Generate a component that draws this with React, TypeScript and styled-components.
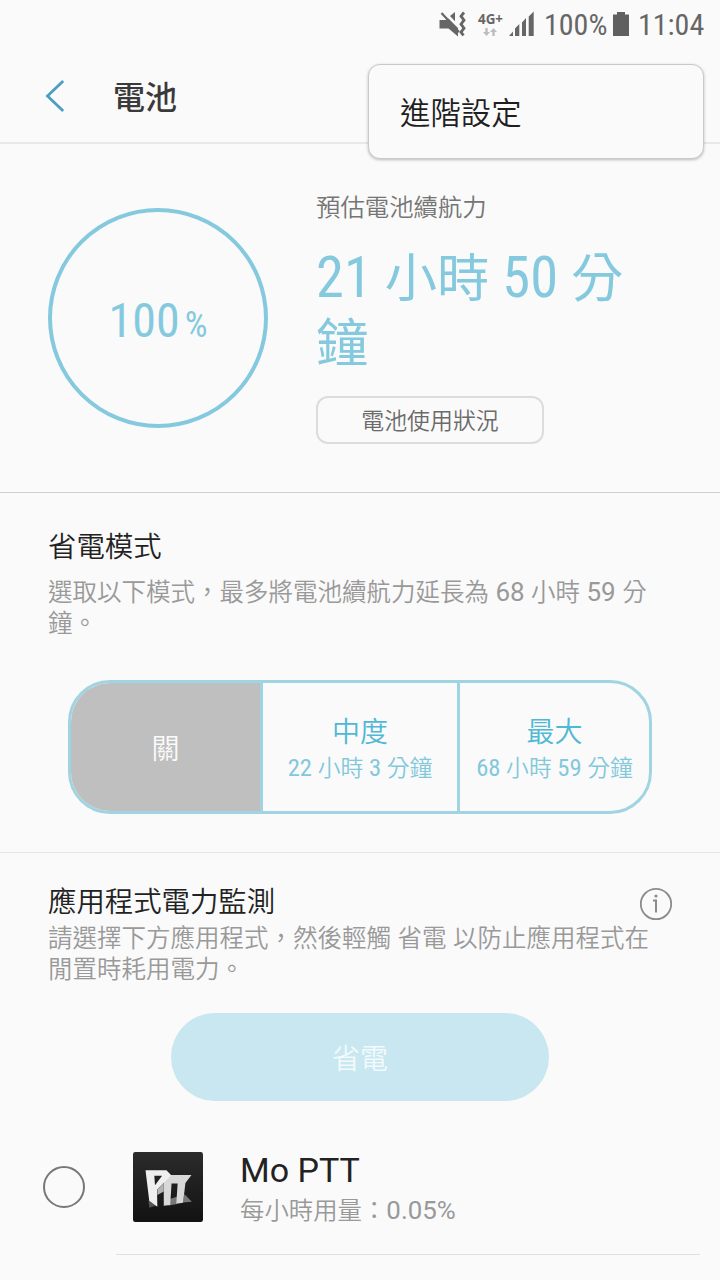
import React from 'react';
import styled, { createGlobalStyle } from 'styled-components';

const Global = createGlobalStyle`
  * { box-sizing: border-box; }
  body {
    margin: 0;
    background: #fafafa;
    color: #252525;
    font-family: Roboto, "Noto Sans CJK TC", sans-serif;
    font-weight: 350;
  }
  h1, h2, p { margin: 0; font-weight: inherit; }
  button { margin: 0; padding: 0; border: 0; background: none; color: inherit; font: inherit; }
`;

const Screen = styled.div`
  position: relative;
  width: 720px;
  height: 1280px;
  overflow: hidden;
  background: #fafafa;
`;

/* Latin runs are set slightly larger than the Chinese text around them. */
const Latin = styled.span<{ $condensed?: boolean }>`
  font-family: ${p => (p.$condensed ? '"Roboto Condensed", ' : '')}Roboto, sans-serif;
  font-size: ${p => (p.$condensed ? 1.08 : 1.06)}em;
  font-weight: 400;
  line-height: 0;
`;

const StatusBar = styled.div`
  display: flex;
  justify-content: flex-end;
  height: 48px;
  padding: 0 16px 0 0;
  color: #666;
`;

const StatusText = styled.span<{ $width: number }>`
  width: ${p => p.$width}px;
  font: 400 30px/50px "Roboto Condensed", Roboto, sans-serif;
  white-space: nowrap;
`;

const StatusIcons = styled.svg`
  display: block;
  width: 104px;
  height: 48px;
  margin-right: 4px;
`;

const BatteryIcon = styled.svg`
  display: block;
  width: 16px;
  height: 25px;
  margin: 12px 9px 0 6px;
`;

const NetworkLabel = styled.text`
  font: 700 13.5px "Open Sans", "Noto Sans", sans-serif;
`;

const Header = styled.header`
  display: flex;
  align-items: center;
  height: 96px;
  padding: 4px 0 0 44px;
  border-bottom: 2px solid #e8e8e8;
`;

const BackIcon = styled.svg`
  display: block;
  width: 22px;
  height: 34px;
  margin: -2px 47px 0 0;
`;

const Title = styled.h1`
  font-size: 32px;
  line-height: 42px;
  font-weight: 500;
  color: #3a3a3a;
  padding-top: 2px;
`;

const Menu = styled.div`
  position: absolute;
  top: 64px;
  left: 368px;
  width: 336px;
  height: 95px;
  padding: 0 31px;
  border: 1px solid #c9c9c9;
  border-radius: 12px;
  background: #fafafa;
  box-shadow: 0 1px 3px rgba(0, 0, 0, 0.25);
  font-size: 30.4px;
  line-height: 98px;
  color: #1f1f1f;
`;

const Overview = styled.section`
  display: flex;
  height: 349px;
  padding: 48px 40px 0 48px;
  border-bottom: 1px solid #cfcfcf;
`;

const Gauge = styled.div`
  display: flex;
  align-items: baseline;
  justify-content: center;
  width: 220px;
  height: 220px;
  margin: 16px 49px 0 0;
  border: 4px solid #84c9de;
  border-radius: 50%;
  color: #84c9de;
  font-family: "Roboto Condensed", Roboto, sans-serif;
  font-weight: 400;
`;

const GaugeValue = styled.span`
  font-size: 48px;
  line-height: 218px;
`;

const GaugeUnit = styled.span`
  margin-left: 5px;
  font-size: 36px;
  line-height: 60px;
`;

const Estimate = styled.div`
  width: 330px;
  margin-left: -1px;
`;

const EstimateLabel = styled.p`
  font-size: 24.4px;
  line-height: 32px;
  color: #757575;
`;

const EstimateValue = styled.p`
  margin: 23px 0 19px;
  font-size: 52.3px;
  font-weight: 400;
  line-height: 65px;
  color: #84c9de;
`;

const UsageButton = styled.button`
  display: block;
  width: 228px;
  height: 48px;
  border: 2px solid #dcdcdc;
  border-radius: 12px;
  font-size: 22.9px;
  line-height: 44px;
  padding-top: 2px;
  color: #6b6b6b;
`;

const Section = styled.section<{ $height: number; $top: number; $line?: boolean }>`
  height: ${p => p.$height}px;
  padding: ${p => p.$top}px 48px 0;
  border-bottom: ${p => (p.$line ? '1px solid #e6e6e6' : '0')};
`;

const SectionHead = styled.div`
  display: flex;
  justify-content: space-between;
  height: 36px;
`;

const Heading = styled.h2`
  font-size: 28.4px;
  line-height: 36px;
  color: #222;
`;

const Description = styled.p<{ $top?: number }>`
  margin-top: ${p => p.$top ?? 0}px;
  font-size: 24.5px;
  line-height: 30.5px;
  color: #999;
  white-space: nowrap;
`;

const InfoIcon = styled.svg`
  display: block;
  width: 34px;
  height: 34px;
  margin: 2px -1px 0 0;
`;

const Modes = styled.div`
  display: flex;
  height: 134px;
  margin: 41px 20px 0;
  border: 3px solid #a0d4e3;
  border-radius: 42px;
  overflow: hidden;
`;

const Mode = styled.button<{ $width: number; $active?: boolean }>`
  display: flex;
  flex-direction: column;
  align-items: center;
  justify-content: center;
  width: ${p => p.$width}px;
  padding-top: 6px;
  background: ${p => (p.$active ? '#bfbfbf' : 'transparent')};
  color: ${p => (p.$active ? '#fafafa' : '#4fb8d4')};
  & + & { border-left: 3px solid #a0d4e3; }
`;

const ModeName = styled.span`
  font-size: 28px;
  line-height: 38px;
`;

const ModeTime = styled.span`
  font-size: 22.8px;
  line-height: 34px;
  color: #82c8dc;
  white-space: nowrap;
`;

const SaveButton = styled.button`
  display: block;
  width: 378px;
  height: 88px;
  margin: 28px auto 0;
  border-radius: 44px;
  background: #c9e7f0;
  font-size: 28px;
  line-height: 86px;
  padding-top: 4px;
  color: #f1fafc;
`;

const AppRow = styled.div`
  display: flex;
  height: 103px;
  margin-top: 51px;
`;

const Radio = styled.span`
  width: 42px;
  height: 42px;
  margin: 14px 48px 0 -5px;
  border: 2px solid #777;
  border-radius: 50%;
`;

const AppIcon = styled.svg`
  display: block;
  width: 70px;
  height: 70px;
  margin: 0 37px 0 0;
`;

const AppText = styled.div`
  width: 400px;
`;

const AppName = styled.p`
  font-size: 34px;
  font-weight: 400;
  line-height: 37px;
  color: #222;
`;

const AppUsage = styled.p`
  margin-top: 5px;
  font-size: 24.4px;
  line-height: 34px;
  color: #999;
`;

const RowLine = styled.div`
  height: 1px;
  margin: -1px -28px 0 68px;
  background: #e0e0e0;
`;

export default function App() {
  return (
    <Screen>
      <Global />
      <StatusBar>
        <StatusIcons viewBox="436 0 104 48" fill="#666">
          <path d="M439.500 20h7l2-1.500 9.500 9.500V36.500l-9.500-8h-9z" />
          <path d="M450 16l5-4v9.200z" />
          <path d="M441.500 13l17.500 19" stroke="#666" strokeWidth="2.200" />
          <path d="M464 12.500l-3 3.700 3 4-3 4 3 4-3 4 2.500 3.300" fill="none" stroke="#666" strokeWidth="2.800" />
          <NetworkLabel x="478" y="23.500" textLength="25" lengthAdjust="spacingAndGlyphs">4G+</NetworkLabel>
          <path d="M485.300 28h2.400v4h2.300l-3.500 4-3.500-4h2.300zM492.300 36h2.400v-4h2.300l-3.500-4-3.500 4h2.300z" fill="#bdbdbd" />
          <path d="M509 36l4-4.500V36zM515 36v-7.500l4.300-4.500V36zM522 36V22.500l4-4.500v18zM528.700 36V16.500l5-5V36z" />
        </StatusIcons>
        <StatusText $width={63}>100%</StatusText>
        <BatteryIcon viewBox="0 0 16 25">
          <path d="M0 2.500h4V0h8v2.500h4V24H0z" fill="#606060" />
        </BatteryIcon>
        <StatusText $width={66}>11:04</StatusText>
      </StatusBar>

      <Header>
        <BackIcon viewBox="0 0 22 34">
          <path d="M19.200 2L3.500 17l15.700 15" fill="none" stroke="#4d9fbe" strokeWidth="2.800" />
        </BackIcon>
        <Title>電池</Title>
      </Header>
      <Menu>進階設定</Menu>

      <Overview>
        <Gauge>
          <GaugeValue>100</GaugeValue>
          <GaugeUnit>%</GaugeUnit>
        </Gauge>
        <Estimate>
          <EstimateLabel>預估電池續航力</EstimateLabel>
          <EstimateValue>
            <Latin $condensed>21 </Latin>小時<Latin $condensed> 50 </Latin>分<br />鐘
          </EstimateValue>
          <UsageButton>電池使用狀況</UsageButton>
        </Estimate>
      </Overview>

      <Section $height={360} $top={37} $line>
        <Heading>省電模式</Heading>
        <Description $top={12}>
          選取以下模式，最多將電池續航力延長為<Latin> 68 </Latin>小時<Latin> 59 </Latin>分<br />鐘。
        </Description>
        <Modes>
          <Mode $width={189} $active><ModeName>關</ModeName></Mode>
          <Mode $width={197}>
            <ModeName>中度</ModeName>
            <ModeTime><Latin $condensed>22 </Latin>小時<Latin $condensed> 3 </Latin>分鐘</ModeTime>
          </Mode>
          <Mode $width={192}>
            <ModeName>最大</ModeName>
            <ModeTime><Latin $condensed>68 </Latin>小時<Latin $condensed> 59 </Latin>分鐘</ModeTime>
          </Mode>
        </Modes>
      </Section>

      <Section $height={427} $top={32}>
        <SectionHead>
          <Heading>應用程式電力監測</Heading>
          <InfoIcon viewBox="0 0 34 34">
            <circle cx="17" cy="17" r="15.200" fill="none" stroke="#8c8c8c" strokeWidth="1.800" />
            <path d="M14 13.500h3v12" fill="none" stroke="#8c8c8c" strokeWidth="2" />
            <circle cx="17" cy="9" r="1.600" fill="#8c8c8c" />
          </InfoIcon>
        </SectionHead>
        <Description $top={3}>
          請選擇下方應用程式，然後輕觸<Latin> </Latin>省電<Latin> </Latin>以防止應用程式在<br />閒置時耗用電力。
        </Description>
        <SaveButton>省電</SaveButton>
        <AppRow>
          <Radio />
          <AppIcon viewBox="18 18 207 207">
            <defs>
              <linearGradient id="tile" x1="0" y1="0" x2="0" y2="1">
                <stop offset="0" stopColor="#2b2b2b" />
                <stop offset="1" stopColor="#121212" />
              </linearGradient>
            </defs>
            <rect x="18" y="18" width="207" height="207" rx="7" fill="url(#tile)" />
            <path d="M64 160l22 16-20 7z" fill="#555" />
            <path d="M124 158l24-8v22l-24 4z" fill="#777" />
            <path d="M170 142l22 23-26 2z" fill="#777" />
            <path d="M109 98l22-12h60l-18 24-7 58-20 3 4-60h-18l-4 64-19 2z" fill="#d8d8d8" />
            <path d="M55 72h62l14 15-42 43 1 50-24-18zM81 88l2 28 21-28z" fill="#efefef" fillRule="evenodd" />
            <path d="M109 109v26l-19 10v-16z" fill="#b4b4b4" />
          </AppIcon>
          <AppText>
            <AppName>Mo PTT</AppName>
            <AppUsage>每小時用量：<Latin>0.05%</Latin></AppUsage>
          </AppText>
        </AppRow>
        <RowLine />
      </Section>
    </Screen>
  );
}
